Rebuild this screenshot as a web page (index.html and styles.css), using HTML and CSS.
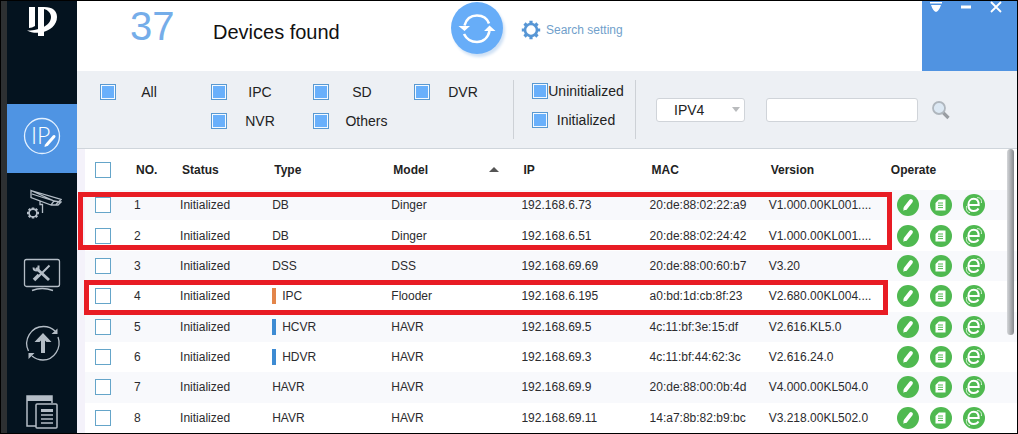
FILE: index.html
```html
<!DOCTYPE html>
<html lang="en">
<head>
<meta charset="utf-8">
<title>Devices</title>
<link rel="stylesheet" href="styles.css">
</head>
<body>
<svg class="sprite" aria-hidden="true">
  <symbol id="edit" viewBox="0 0 22 22"><circle cx="11" cy="11" r="11"/><path d="M8.500 14 14 7" stroke="#fff" stroke-width="3.800" stroke-linecap="round"/><path d="m6.300 16.700.5-3 2.200 1.900z" fill="#fff"/></symbol>
  <symbol id="detail" viewBox="0 0 22 22"><circle cx="11" cy="11" r="11"/><path d="M9 5.500h6.500v11h-10V9z" fill="#fff"/><path d="M8 9h5M8 11.300h5M8 13.600h5" stroke="#4fb950" stroke-width="1"/></symbol>
  <symbol id="web" viewBox="0 0 22 22"><circle cx="11" cy="11" r="11"/><path d="M5.500 11h10.200C15.700 6.800 13.500 4.800 10.700 4.800c-3.200 0-5.300 2.600-5.300 6.100 0 3.700 2.100 6.100 5.400 6.100 2.300 0 3.800-.9 4.700-2.500" fill="none" stroke="#fff" stroke-width="2"/><path d="M14 3.800c3-.6 5 1.700 4.400 5.200M3.700 12c-1 3.500.3 6 3.300 6.800" fill="none" stroke="#dff3df" stroke-width="1"/></symbol>
</svg>
<div class="app">
  <nav class="sidebar" aria-label="Main">
    <div class="logo">
      <svg width="32" height="32" viewBox="0 0 32 32" aria-label="IP logo" role="img"><path d="M3 1h6v19q-3 2-6 2zM12 1h6v29h-6z" fill="#fff"/><path d="M18 1c9 0 13 4 13 10 0 8-7 14-16 15.500-5 .8-10 .3-14-2C12 25 25 20 25 11c0-4-3-7-7-8z" fill="#fff"/></svg>
    </div>
    <a class="nav-item active" href="#ip" aria-label="Modify IP">
      <svg width="40" height="40" viewBox="0 0 40 40"><circle cx="20" cy="20" r="17.500" fill="none" stroke="#e2f0ff" stroke-width="1.300"/><text class="ip-text" x="9" y="28">IP</text><path d="m25 28.500 7-8" stroke="#fff" stroke-width="3" stroke-linecap="round"/><path d="m22.500 31 .5-3 2.300 2z" fill="#fff"/></svg>
    </a>
    <a class="nav-item" href="#device" aria-label="Device config">
      <svg width="40" height="40" viewBox="0 0 40 40" fill="none" stroke="#b4bdc6" stroke-width="1.300"><path d="M9 5.500v7l20 7.500 3-4zM9 5.500l30 9-5 5M32 16l7 1-3 3-7 0M10 9l22 7M18 16v3.500h2.500v8.500"/><path d="M11 22.500v2M11 31v2.500M5 28h2.500M14.500 28H17M6.800 23.800l1.700 1.700M13.500 30.500l1.700 1.700M15.200 23.800l-1.700 1.700M8.500 30.500l-1.700 1.700" stroke-width="2.500"/><circle cx="11" cy="28" r="3.900" stroke-width="1.600"/></svg>
    </a>
    <a class="nav-item" href="#tools" aria-label="Tools">
      <svg width="40" height="40" viewBox="0 0 40 40" fill="none" stroke="#b4bdc6"><rect x="2.500" y="5.500" width="35" height="27" rx="2" stroke-width="1.300"/><path d="M10 36.500q10-4 21 0" stroke-width="1.600"/><path d="m14 14 13 12" stroke-width="3"/><path d="M11.500 13.500q0 4 5 2.500V11.500M27.500 11.500 17 22" stroke-width="2"/><path d="m17 21-5 5" stroke-width="3.600"/></svg>
    </a>
    <a class="nav-item" href="#upgrade" aria-label="Upgrade">
      <svg width="40" height="40" viewBox="0 0 40 40" fill="none" stroke="#b4bdc6"><path d="M6.500 28C1 17 9 3.500 21.500 3.500q7 0 11.500 4.500M36 14c4 11-4 23-15 23-5 0-8-1.500-11-4" stroke-width="1.300"/><path d="M21 30V15" stroke-width="4"/><path d="m12.500 19 8.500-9 8.500 9h-5L21 15.500 17.500 19zM35.500 5.500V11h-6zM6.500 36v-6h6z" fill="#b4bdc6" stroke="none"/></svg>
    </a>
    <a class="nav-item" href="#templates" aria-label="Templates">
      <svg width="40" height="40" viewBox="0 0 40 40" fill="none" stroke="#b4bdc6" stroke-width="1.500"><path d="M14 34H5V4h25v7"/><path d="M5 6.500h25" stroke-width="5"/><rect x="14" y="12" width="21" height="24" rx="1"/><path d="M19 18.500h12" stroke-width="3"/><path d="M19 23h12M19 27h12M19 31h12"/></svg>
    </a>
  </nav>
  <main class="main">
    <header class="topbar">
      <span class="count">37</span>
      <h1>Devices found</h1>
      <button class="refresh" type="button" aria-label="Refresh">
        <svg width="52" height="52" viewBox="0 0 52 52" fill="none" stroke="#fff" stroke-width="2.600"><path d="M13.500 23.500C15.500 16 20 13.500 26 13.500c5 0 10 2.500 12 8M38.500 29c-1.500 7-6.500 11-12.500 11s-10.500-3-13-8"/><path d="M7.500 24h11.500L13.500 29zM33 29l5.500-5.500 6 5.500z" fill="#fff" stroke="none"/></svg>
      </button>
      <a class="setting" href="#search-setting">
        <svg width="20" height="20" viewBox="0 0 20 20" fill="none" stroke="#5796d5"><circle cx="10" cy="10" r="6" stroke-width="2.600"/><path d="M10 .8v3M10 16.200v3M.8 10h3M16.200 10h3M3.500 3.500l2 2M14.500 14.500l2 2M16.500 3.500l-2 2M5.500 14.500l-2 2" stroke-width="3.200"/></svg>
        Search setting</a>
      <div class="window-tools">
        <button type="button" aria-label="Menu"><svg width="12" height="12" viewBox="0 0 12 12"><path d="M0 1h12v1.500H0zM1 4h10Q9 10 6 11 3 10 1 4z" fill="#fff"/></svg></button>
        <button type="button" aria-label="Minimize"><svg width="12" height="12" viewBox="0 0 12 12"><path d="M1 4.500h10v3H1z" fill="#fff"/></svg></button>
        <button type="button" aria-label="Close"><svg width="12" height="12" viewBox="0 0 12 12"><path d="m1 1 10 10M11 1 1 11" stroke="#fff" stroke-width="1.800"/></svg></button>
      </div>
    </header>
    <form class="filters">
      <div class="types">
        <label class="check"><input type="checkbox" checked><span>All</span></label>
        <label class="check"><input type="checkbox" checked><span>IPC</span></label>
        <label class="check"><input type="checkbox" checked><span>SD</span></label>
        <label class="check"><input type="checkbox" checked><span>DVR</span></label>
        <label class="check second"><input type="checkbox" checked><span>NVR</span></label>
        <label class="check long"><input type="checkbox" checked><span>Others</span></label>
      </div>
      <div class="states">
        <label class="check"><input type="checkbox" checked><span>Uninitialized</span></label>
        <label class="check"><input type="checkbox" checked><span>Initialized</span></label>
      </div>
      <div class="select-box"><select aria-label="IP version"><option>IPV4</option><option>IPV6</option></select></div>
      <input class="search" type="text" aria-label="Search">
      <button class="find" type="button" aria-label="Find">
        <svg width="20" height="20" viewBox="0 0 20 20"><path d="m11.500 12 6 6" stroke="#999da2" stroke-width="3.200"/><circle cx="8" cy="8" r="6" fill="#dce8f3" stroke="#afb6bd" stroke-width="1.800"/></svg>
      </button>
    </form>
    <section class="results">
      <table>
        <colgroup><col class="c-check"><col class="c-no"><col class="c-status"><col class="c-type"><col class="c-model"><col class="c-ip"><col class="c-mac"><col class="c-version"><col class="c-operate"></colgroup>
        <thead>
          <tr><th><input type="checkbox" aria-label="Select all"></th><th>NO.</th><th>Status</th><th>Type</th><th><div class="sorted">Model<i></i></div></th><th>IP</th><th>MAC</th><th>Version</th><th>Operate</th></tr>
        </thead>
        <tbody id="rows"></tbody>
      </table>
      <div class="thumb"></div>
      <div class="mark mark-first"></div>
      <div class="mark mark-second"></div>
    </section>
  </main>
</div>
<script src="app.js"></script>
</body>
</html>
```
FILE: app.js
```js
const devices = [
  ["DB", "Dinger", "192.168.6.73", "20:de:88:02:22:a9", "V1.000.00KL001...."],
  ["DB", "Dinger", "192.168.6.51", "20:de:88:02:24:42", "V1.000.00KL001...."],
  ["DSS", "DSS", "192.168.69.69", "20:de:88:00:60:b7", "V3.20"],
  ["IPC", "Flooder", "192.168.6.195", "a0:bd:1d:cb:8f:23", "V2.680.00KL004....", "orange"],
  ["HCVR", "HAVR", "192.168.69.5", "4c:11:bf:3e:15:df", "V2.616.KL5.0", "blue"],
  ["HDVR", "HAVR", "192.168.69.3", "4c:11:bf:44:62:3c", "V2.616.24.0", "blue"],
  ["HAVR", "HAVR", "192.168.69.9", "20:de:88:00:0b:4d", "V4.000.00KL504.0"],
  ["HAVR", "HAVR", "192.168.69.11", "14:a7:8b:82:b9:bc", "V3.218.00KL502.0"]
];
const action = (id, label) =>
  `<button type="button" aria-label="${label}"><svg width="22" height="22"><use href="#${id}"/></svg></button>`;
document.getElementById("rows").innerHTML = devices.map(([type, model, ip, mac, version, tag], i) =>
  `<tr><td><input type="checkbox" aria-label="Select device ${i + 1}"></td><td>${i + 1}</td><td>Initialized</td>` +
  `<td>${tag ? `<div class="tag ${tag}">${type}</div>` : type}</td><td>${model}</td><td>${ip}</td><td>${mac}</td><td>${version}</td>` +
  `<td><div class="actions">${action("edit", "Edit")}${action("detail", "Details")}${action("web", "Open web page")}</div></td></tr>`
).join("");
```
FILE: styles.css
```css
* { box-sizing: border-box; }
body {
  margin: 0;
  font: 12px/16px "Liberation Sans", Arial, sans-serif;
  color: #2b2b2e;
  background: #000;
}
button { padding: 0; border: 0; background: none; }
svg { display: block; }
.sprite { position: absolute; width: 0; height: 0; }
.app {
  display: grid;
  grid-template-columns: 76px minmax(0, 1fr);
  height: 100vh;
  border: 1px solid #000;
}
.sidebar {
  border-left: 6px solid #2d3032;
  background: #04131f;
  overflow: hidden;
}
.logo { display: flex; justify-content: center; height: 103px; padding-top: 5px; }
.nav-item { display: flex; align-items: center; justify-content: center; height: 69px; padding-bottom: 6px; }
.nav-item.active { background: #4f94e3; }
.ip-text { font: 300 23px Lato, sans-serif; fill: #fff; }

.main { display: flex; flex-direction: column; min-width: 0; background: #f4f2fa; }
.topbar { display: flex; align-items: center; height: 70px; padding-left: 53px; background: #fff; flex: none; }
.count { width: 83px; margin-bottom: 20px; font-size: 40px; line-height: 40px; color: #75ade9; }
h1 { width: 238px; margin: 0 0 8px; font-size: 20px; line-height: 24px; font-weight: 400; color: #111; }
.refresh {
  width: 52px;
  height: 52px;
  margin-bottom: 16px;
  border-radius: 50%;
  background: #67adf8;
  box-shadow: 2px 3px 3px #cfe1f5;
}
.setting {
  display: flex;
  align-items: center;
  gap: 5px;
  margin: 0 0 12px 18px;
  color: #719fcb;
  text-decoration: none;
}
.window-tools {
  display: flex;
  align-self: stretch;
  align-items: flex-start;
  gap: 18px;
  width: 95px;
  margin-left: auto;
  padding-left: 8px;
  background: #5093e1;
}

.filters { display: flex; align-items: center; height: 78px; padding-left: 23px; background: #edf0f4; border-bottom: 1px solid #cfd5db; flex: none; }
.types { display: grid; grid-template-columns: 111px 102px 101px 99px; row-gap: 13px; padding-bottom: 7px; }
.second { grid-column: 2; }
.check { display: flex; align-items: center; height: 16px; font-size: 14px; color: #222; }
.check span { width: 66px; text-align: center; }
.check.long span { width: 75px; }
.states { display: grid; row-gap: 13px; padding: 3px 11px 11px 18px; border: solid #cdd1d6; border-width: 0 1px; }
.states .check span { width: 76px; }
input[type="checkbox"] {
  appearance: none;
  display: block;
  flex: none;
  width: 16px;
  height: 16px;
  margin: 0;
  border: 1px solid #65a5c9;
  background: #fff;
}
input[type="checkbox"]:checked { border-color: #5999d1; background: #69b0fb; box-shadow: inset 0 0 0 1px #f4faff; }
.select-box { position: relative; margin-left: 20px; }
.select-box::after {
  content: "";
  position: absolute;
  right: 5px;
  top: 9px;
  border: solid transparent;
  border-width: 5px 4px 0;
  border-top-color: #b9bbbd;
}
select, .search {
  display: block;
  height: 24px;
  border: 1px solid #d0d4d9;
  border-radius: 3px;
  background: #fff;
  font: 14px/16px "Liberation Sans", Arial, sans-serif;
  color: #222;
}
select { appearance: none; width: 89px; padding: 0 17px; }
.search { width: 152px; margin-left: 21px; }
.find { margin-left: 13px; }

.results { position: relative; flex: 1; min-height: 0; padding-left: 8px; background: #f4f2fa; }
table { width: 100%; height: 100%; table-layout: fixed; border-spacing: 0; background: #fff; }
.c-check { width: 49px; }
.c-no { width: 46px; }
.c-status { width: 92px; }
.c-type, .c-mac { width: 119px; }
.c-model { width: 130px; }
.c-ip { width: 128px; }
.c-version { width: 120px; }
.c-operate { width: 128px; }
th, td { padding: 0; text-align: left; white-space: nowrap; }
th { height: 41px; padding-left: 2px; color: #222; }
th:first-child, td:first-child { padding-left: 10px; }
td:last-child { padding-left: 8px; }
tbody tr:nth-child(odd) { background: #f8f9fc; }
.sorted { display: flex; align-items: center; justify-content: space-between; padding-right: 22px; }
.sorted i { border: solid transparent; border-width: 0 5px 5px; border-bottom-color: #555; }
.actions { display: flex; gap: 11px; }
.actions svg { fill: #4fb950; }
.tag { padding-left: 6px; border-left: 4px solid #3d8bd3; }
.tag.orange { border-color: #e3854a; }
.thumb {
  position: absolute;
  right: 3px;
  top: 0;
  width: 7px;
  height: 186px;
  border-radius: 4px;
  background: linear-gradient(90deg, #d5d7da, #85888c);
}
.mark { position: absolute; border: 5px solid #e81c24; }
.mark-first { left: 1px; right: 125px; top: 43px; height: 58px; }
.mark-second { left: 7px; right: 129px; top: 131px; height: 35px; }
```
